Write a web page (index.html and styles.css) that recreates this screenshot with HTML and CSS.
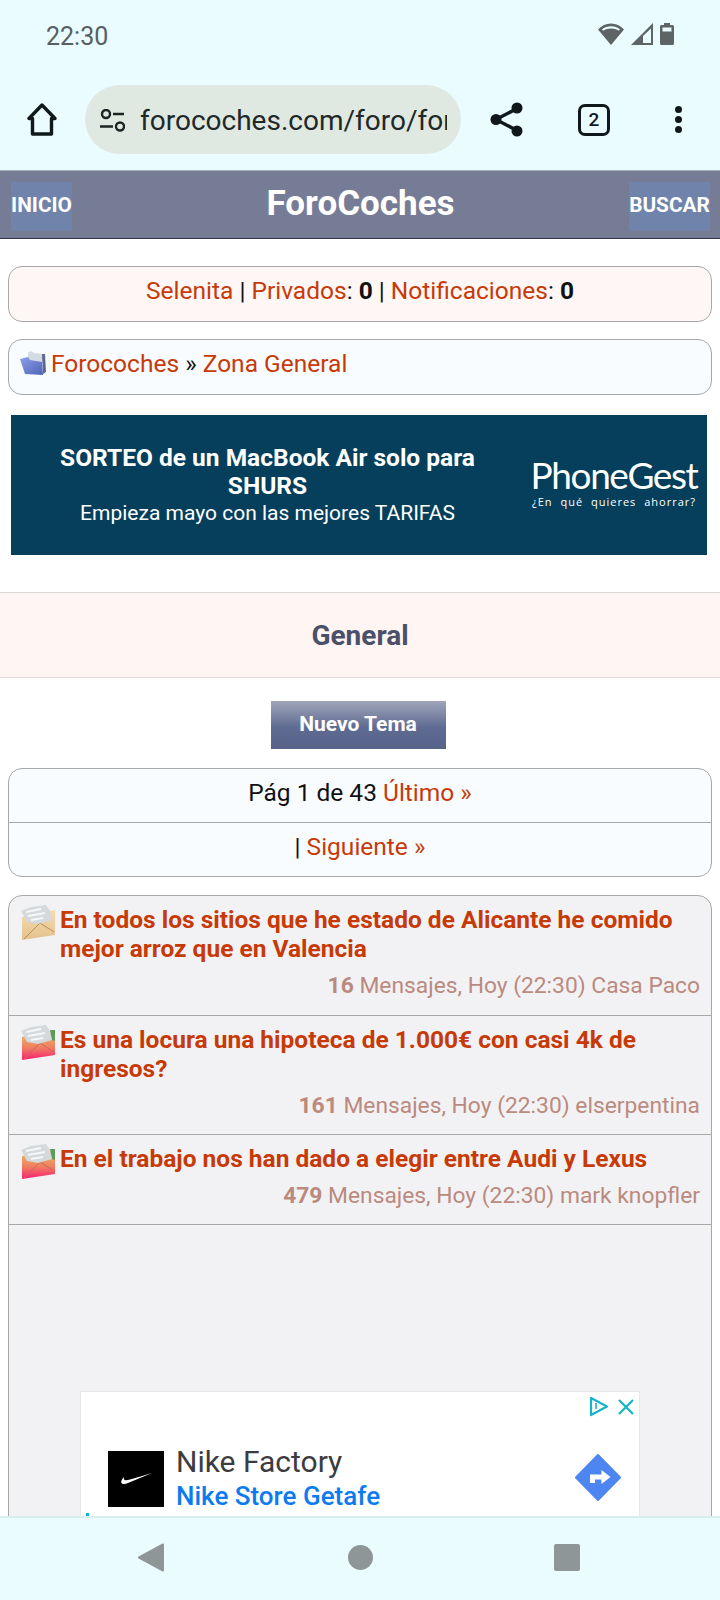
FILE: index.html
```html
<!DOCTYPE html>
<html>
<head>
    <meta charset="UTF-8">
    <meta name="viewport" content="width=device-width, initial-scale=1.0">
    <title>ForoCoches</title>
    <link rel="stylesheet" href="styles.css">
</head>

<body>
    <div class="phone">
        <div class="status-bar">
            <span class="clock">22:30</span>
            <div class="status-icons">
                <svg width="26" height="22" viewBox="0 0 26 22"><path d="M13 22 0 6.500C3.500 2.500 8 .5 13 .5s9.500 2 13 6z" fill="#5c6466"/><path d="M4 6.300C6.500 4.300 9.500 3.300 13 3.300s6.500 1 9 3l-1.200 1.500C18.500 6.200 16 5.400 13 5.400s-5.500.8-7.800 2.400z" fill="#eafcff"/></svg>
                <svg width="22" height="22" viewBox="0 0 22 22"><path d="M22 0v22H0z" fill="#5c6466"/><path d="M20 5.500V20H12V13z" fill="#eafcff"/></svg>
                <svg width="14" height="22" viewBox="0 0 14 22"><path d="M4 0h6v2h2.500A1.500 1.500 0 0 1 14 3.500v17a1.500 1.500 0 0 1-1.500 1.500h-11A1.500 1.500 0 0 1 0 20.500v-17A1.500 1.500 0 0 1 1.500 2H4z" fill="#5c6466"/><rect x="2.500" y="4.500" width="9" height="4" fill="#eafcff"/></svg>
            </div>
        </div>

        <div class="toolbar">
            <svg class="home-icon" width="32" height="33" viewBox="0 0 32 33"><path d="M16 2 3 15.500h3.500V31h19V15.500H29z" fill="none" stroke="#10181c" stroke-width="3.400" stroke-linejoin="round"/></svg>
            <div class="url-bar">
                <svg width="25" height="23" viewBox="0 0 25 23"><g fill="none" stroke="#1c2426" stroke-width="2.400"><circle cx="6" cy="5" r="4"/><circle cx="20" cy="17.500" r="4"/></g><path d="M13 5h11M0 17.500h13" stroke="#1c2426" stroke-width="2.600"/></svg>
                <span class="url-text">forocoches.com/foro/for</span>
            </div>
            <svg class="share-icon" width="34" height="35" viewBox="0 0 34 35"><path d="M27 6.500 6 17.500l21 11" fill="none" stroke="#10181c" stroke-width="3.400"/><circle cx="27" cy="6" r="5.500" fill="#10181c"/><circle cx="6" cy="17.500" r="5.500" fill="#10181c"/><circle cx="27" cy="29" r="5.500" fill="#10181c"/></svg>
            <div class="tab-count">2</div>
            <div class="dots"><i></i><i></i><i></i></div>
        </div>

        <div class="page">
            <div class="site-header">
                <a class="head-btn" href="#inicio">INICIO</a>
                <span class="site-title">ForoCoches</span>
                <a class="head-btn head-btn-wide" href="#buscar">BUSCAR</a>
            </div>

            <div class="box box-user">
                <a href="#u">Selenita</a> | <a href="#p">Privados</a>: <b>0</b> | <a href="#n">Notificaciones</a>: <b>0</b>
            </div>

            <div class="box box-crumb">
                <svg width="26" height="24" viewBox="0 0 26 24">
                    <defs><linearGradient id="folderFront" x1="0" y1="0" x2="1" y2="1"><stop offset="0" stop-color="#8ea0ea"/><stop offset="1" stop-color="#4e62b8"/></linearGradient></defs>
                    <path d="M8 2 11 0 14 2 24 3 25 12H8z" fill="#d5dbe6"/>
                    <path d="M22 3 25 3 26 21 23 23z" fill="#5b6890"/>
                    <path d="M0 8 8 6 10 9 22 11 23 24 5 23z" fill="url(#folderFront)"/>
                </svg>
                <a href="#f">Forocoches</a> » <a href="#z">Zona General</a>
            </div>

            <div class="banner">
                <div class="banner-text">
                    <b>SORTEO de un MacBook Air solo para SHURS</b>
                    <span>Empieza mayo con las mejores TARIFAS</span>
                </div>
                <div class="banner-logo">
                    <span class="logo-name">PhoneGest</span>
                    <span class="logo-tag">¿En qué quieres ahorrar?</span>
                </div>
            </div>

            <div class="section-title">General</div>

            <div class="new-thread-row">
                <a class="new-thread" href="#nuevo">Nuevo Tema</a>
            </div>

            <div class="box box-pager">
                <div class="pager-row">Pág 1 de 43 <a href="#u">Último »</a></div>
                <div class="pager-row">| <a href="#s">Siguiente »</a></div>
            </div>

            <div class="threads">
                <div class="thread">
                    <svg class="envelope" width="35" height="36" viewBox="0 0 35 36">
                        <defs><linearGradient id="envRead" x1="0" y1="0" x2="0" y2="1"><stop offset="0" stop-color="#f5dcae"/><stop offset="1" stop-color="#e4c28c"/></linearGradient></defs>
                        <path d="M1 12 34 5V30L1 35z" fill="url(#envRead)"/>
                        <path d="M3 34 19 18 33 27" fill="none" stroke="#b58f5c" stroke-width="1"/>
                        <path d="M0 6 10 2 25 0 29 6 31 15 17 19 6 17z" fill="#d5d9dc"/>
                        <path d="M5 7 20 4M7 11 24 8M10 15 22 13" stroke="#f6f7f8" stroke-width="2"/>
                    </svg>
                    <div class="thread-body">
                        <a class="thread-title" href="#t1">En todos los sitios que he estado de Alicante he comido mejor arroz que en Valencia</a>
                        <div class="thread-meta"><b>16</b> Mensajes, Hoy (22:30) Casa Paco</div>
                    </div>
                </div>
                <div class="thread">
                    <svg class="envelope" width="35" height="36" viewBox="0 0 35 36">
                        <defs><linearGradient id="envHot" x1="0" y1="0" x2="0" y2="1"><stop offset=".2" stop-color="#e8b060"/><stop offset=".6" stop-color="#f07c62"/><stop offset=".95" stop-color="#f92a70"/></linearGradient></defs>
                        <path d="M1 12 34 5V30L1 35z" fill="url(#envHot)"/>
                        <path d="M3 34 19 18 33 27" fill="none" stroke="#c96a58" stroke-width="1"/>
                        <path d="M29 5 34 5V16L31 15z" fill="#5d9a5d"/>
                        <path d="M0 6 10 2 25 0 29 6 31 15 17 19 6 17z" fill="#d5d9dc"/>
                        <path d="M5 7 20 4M7 11 24 8M10 15 22 13" stroke="#f6f7f8" stroke-width="2"/>
                    </svg>
                    <div class="thread-body">
                        <a class="thread-title" href="#t2">Es una locura una hipoteca de 1.000€ con casi 4k de ingresos?</a>
                        <div class="thread-meta"><b>161</b> Mensajes, Hoy (22:30) elserpentina</div>
                    </div>
                </div>
                <div class="thread">
                    <svg class="envelope" width="35" height="36" viewBox="0 0 35 36">
                        <path d="M1 12 34 5V30L1 35z" fill="url(#envHot)"/>
                        <path d="M3 34 19 18 33 27" fill="none" stroke="#c96a58" stroke-width="1"/>
                        <path d="M29 5 34 5V16L31 15z" fill="#5d9a5d"/>
                        <path d="M0 6 10 2 25 0 29 6 31 15 17 19 6 17z" fill="#d5d9dc"/>
                        <path d="M5 7 20 4M7 11 24 8M10 15 22 13" stroke="#f6f7f8" stroke-width="2"/>
                    </svg>
                    <div class="thread-body">
                        <a class="thread-title" href="#t3">En el trabajo nos han dado a elegir entre Audi y Lexus</a>
                        <div class="thread-meta"><b>479</b> Mensajes, Hoy (22:30) mark knopfler</div>
                    </div>
                </div>

                <div class="ad">
                    <div class="ad-top">
                        <svg width="20" height="21" viewBox="0 0 20 21"><path d="M2 2 18 10.500 2 19z" fill="none" stroke="#16b4c8" stroke-width="2.200" stroke-linejoin="round"/><path d="M7 7v6" stroke="#16b4c8" stroke-width="1.600"/></svg>
                        <svg width="16" height="16" viewBox="0 0 16 16"><path d="M1 1 15 15M15 1 1 15" stroke="#16b4c8" stroke-width="2.200"/></svg>
                    </div>
                    <div class="ad-main">
                        <div class="ad-logo">
                            <svg width="31" height="13" viewBox="0 0 31 13"><path d="M31 0 7 10C4 11.500 1 11.500 .3 9.500 0 8 1 6 3 4 2.500 6 3 7.500 5.500 7.200 8 7 20 3.500 31 0z" fill="#fff"/></svg>
                        </div>
                        <div class="ad-text">
                            <div class="ad-name">Nike Factory</div>
                            <div class="ad-place">Nike Store Getafe</div>
                        </div>
                        <svg class="ad-go" width="46" height="47" viewBox="0 0 46 47"><path d="M23 1 45 23.500 23 46 1 23.500z" fill="#4d86f0" stroke="#4d86f0" stroke-width="2" stroke-linejoin="round"/><path d="M15 32V23.500h11.500V19l9 7-9 7-.1-4.500H20V32z" transform="translate(0 -3)" fill="#fff"/></svg>
                    </div>
                    <div class="ad-mark"></div>
                </div>
            </div>
        </div>

        <div class="nav-bar">
            <svg width="26" height="29" viewBox="0 0 26 29"><path d="M25 1.500v26L1 14.500z" fill="#8f9698" stroke="#8f9698" stroke-width="2" stroke-linejoin="round"/></svg>
            <div class="nav-circle"></div>
            <div class="nav-square"></div>
        </div>
    </div>
</body>

</html>
```

FILE: styles.css
```css
body {
    margin: 0;
    font-family: Roboto, Arial, sans-serif;
    overflow: hidden;
}

a {
    color: #c73a08;
    text-decoration: none;
}

.phone {
    width: 720px;
    height: 1600px;
    display: flex;
    flex-direction: column;
    overflow: hidden;
    background-color: #fff;
}

/* android status bar */
.status-bar {
    height: 69px;
    flex: none;
    box-sizing: border-box;
    display: flex;
    justify-content: space-between;
    align-items: center;
    padding: 3px 46px 0;
    background-color: #eafcff;
}

.clock {
    font-size: 25px;
    color: #566062;
}

.status-icons {
    display: flex;
    align-items: center;
    gap: 7px;
    margin-bottom: 4px;
}

/* browser toolbar */
.toolbar {
    height: 101px;
    flex: none;
    display: flex;
    align-items: center;
    background-color: #eafcff;
}

.home-icon {
    margin-left: 26px;
}

.url-bar {
    width: 376px;
    height: 69px;
    margin-left: 27px;
    padding: 2px 14px 0 15px;
    box-sizing: border-box;
    display: flex;
    align-items: center;
    gap: 15px;
    border-radius: 35px;
    background-color: #e0e9e1;
    overflow: hidden;
}

.url-bar svg {
    flex: none;
}

.url-text {
    font-size: 28px;
    color: #20282a;
    white-space: nowrap;
    overflow: hidden;
}

.share-icon {
    margin-left: 29px;
}

.tab-count {
    width: 32px;
    height: 32px;
    margin-left: 54px;
    box-sizing: border-box;
    display: flex;
    align-items: center;
    justify-content: center;
    border: 3px solid #10181c;
    border-radius: 7px;
    font-size: 19px;
    font-weight: 500;
    color: #10181c;
}

.dots {
    margin-left: 65px;
    display: flex;
    flex-direction: column;
    gap: 3px;
}

.dots i {
    display: block;
    width: 7px;
    height: 7px;
    border-radius: 50%;
    background-color: #10181c;
}

/* web page */
.page {
    flex: 1;
    min-height: 0;
    overflow: hidden;
    display: flex;
    flex-direction: column;
}

.site-header {
    height: 69px;
    flex: none;
    box-sizing: border-box;
    padding: 11px 10px 6px 11px;
    display: grid;
    grid-template-columns: 1fr auto 1fr;
    align-items: start;
    border-top: 1px solid #a9b0b8;
    border-bottom: 1px solid #2f3648;
    background-color: #767c95;
}

.head-btn {
    width: 61px;
    height: 46px;
    padding-bottom: 3px;
    display: flex;
    align-items: center;
    justify-content: center;
    background-color: #6f83ab;
    color: #fff;
    font-size: 20.800px;
    font-weight: 700;
    white-space: nowrap;
}

.head-btn-wide {
    width: 81px;
    justify-self: end;
}

.site-title {
    font-size: 35px;
    font-weight: 700;
    color: #fff;
    line-height: 44px;
}

.box {
    margin: 0 8px;
    flex: none;
    box-sizing: border-box;
    border: 1px solid #a8a8a8;
    border-radius: 14px;
    font-size: 24.500px;
    color: #111;
}

.box-user {
    height: 56px;
    margin-top: 27px;
    padding-bottom: 8px;
    display: flex;
    align-items: center;
    justify-content: center;
    white-space: pre;
    background-color: #fff7f5;
}

.box-crumb {
    height: 56px;
    margin-top: 17px;
    padding: 0 0 8px 11px;
    display: flex;
    align-items: center;
    white-space: pre;
    background-color: #f8fcff;
}

.box-crumb svg {
    margin-right: 5px;
}

.banner {
    height: 140px;
    margin: 20px 13px 0 11px;
    flex: none;
    display: flex;
    align-items: center;
    background-color: #053f5c;
    color: #fff;
}

.banner-text {
    width: 477px;
    margin-left: 18px;
    text-align: center;
}

.banner-text b {
    display: block;
    font-size: 24.500px;
    line-height: 28px;
    font-weight: 700;
}

.banner-text span {
    display: block;
    font-size: 21px;
    line-height: 26px;
}

.banner-logo {
    margin-left: 25px;
    margin-bottom: 6px;
    display: flex;
    flex-direction: column;
    align-items: center;
    width: 166px;
}

.logo-name {
    font-family: Lato, sans-serif;
    font-size: 37px;
    line-height: 38px;
    letter-spacing: -1.400px;
}

.logo-tag {
    font-family: "Open Sans", sans-serif;
    font-size: 11px;
    letter-spacing: 1px;
    word-spacing: 4px;
    white-space: nowrap;
}

.section-title {
    height: 86px;
    margin-top: 37px;
    padding-top: 1px;
    flex: none;
    box-sizing: border-box;
    display: flex;
    align-items: center;
    justify-content: center;
    border-top: 1px solid #ddd8d8;
    border-bottom: 1px solid #ddd8d8;
    background-color: #fff6f4;
    color: #4a5068;
    font-size: 28px;
    font-weight: 700;
}

.new-thread-row {
    margin-top: 23px;
    flex: none;
    display: flex;
    justify-content: center;
    padding-right: 4px;
}

.new-thread {
    width: 175px;
    height: 45px;
    padding-bottom: 3px;
    display: flex;
    align-items: center;
    justify-content: center;
    background: linear-gradient(#a0a5b9, #5f6b92 55%, #566288);
    color: #fff;
    font-size: 21px;
    font-weight: 700;
}

.box-pager {
    margin-top: 19px;
    background-color: #f8fcff;
}

.pager-row {
    height: 46px;
    padding-bottom: 7px;
    display: flex;
    align-items: center;
    justify-content: center;
    white-space: pre;
}

.pager-row + .pager-row {
    border-top: 1px solid #a8a8a8;
}

.threads {
    margin: 18px 8px 0;
    flex: 1;
    border: 1px solid #a8a8a8;
    border-radius: 14px 14px 0 0;
    background-color: #f2f2f4;
}

.thread {
    display: flex;
    padding: 9px 11px 14px 12px;
    border-bottom: 1px solid #a8a8a8;
}

.thread:first-child {
    padding-bottom: 15px;
}

.envelope {
    flex: none;
    margin-right: 4px;
}

.thread-body {
    flex: 1;
}

.thread-title {
    display: block;
    font-size: 24.500px;
    line-height: 29px;
    font-weight: 700;
}

.thread-meta {
    margin-top: 8px;
    text-align: right;
    font-size: 22.800px;
    line-height: 29px;
    color: #bb8a7e;
}

.ad {
    margin: 166px 0 0 71px;
    width: 560px;
    height: 200px;
    position: relative;
    box-sizing: border-box;
    border: 1px solid #e8e8e8;
    background-color: #fff;
}

.ad-top {
    display: flex;
    justify-content: flex-end;
    align-items: center;
    gap: 9px;
    padding: 4px 5px 0 0;
}

.ad-main {
    margin-top: 34px;
    padding: 0 18px 0 27px;
    display: flex;
    align-items: flex-start;
}

.ad-logo {
    width: 56px;
    height: 56px;
    flex: none;
    display: flex;
    align-items: center;
    justify-content: center;
    background-color: #000;
}

.ad-text {
    flex: 1;
    margin: -7px 0 0 12px;
}

.ad-name {
    font-size: 30px;
    line-height: 36px;
    color: #3c3c40;
}

.ad-place {
    font-size: 26px;
    line-height: 32px;
    font-weight: 500;
    color: #0d7bf0;
}

.ad-go {
    flex: none;
    margin-top: 3px;
}

.ad-mark {
    position: absolute;
    left: 5px;
    top: 121px;
    width: 3px;
    height: 4px;
    background-color: #16b4c8;
}

.nav-bar {
    height: 84px;
    flex: none;
    box-sizing: border-box;
    padding: 0 140px 3px 138px;
    display: flex;
    justify-content: space-between;
    align-items: center;
    border-top: 2px solid #d8eef0;
    background-color: #eafcff;
}

.nav-circle {
    width: 25px;
    height: 25px;
    margin-left: 2px;
    border-radius: 50%;
    background-color: #8f9698;
}

.nav-square {
    width: 26px;
    height: 27px;
    border-radius: 2px;
    background-color: #8f9698;
}
```
